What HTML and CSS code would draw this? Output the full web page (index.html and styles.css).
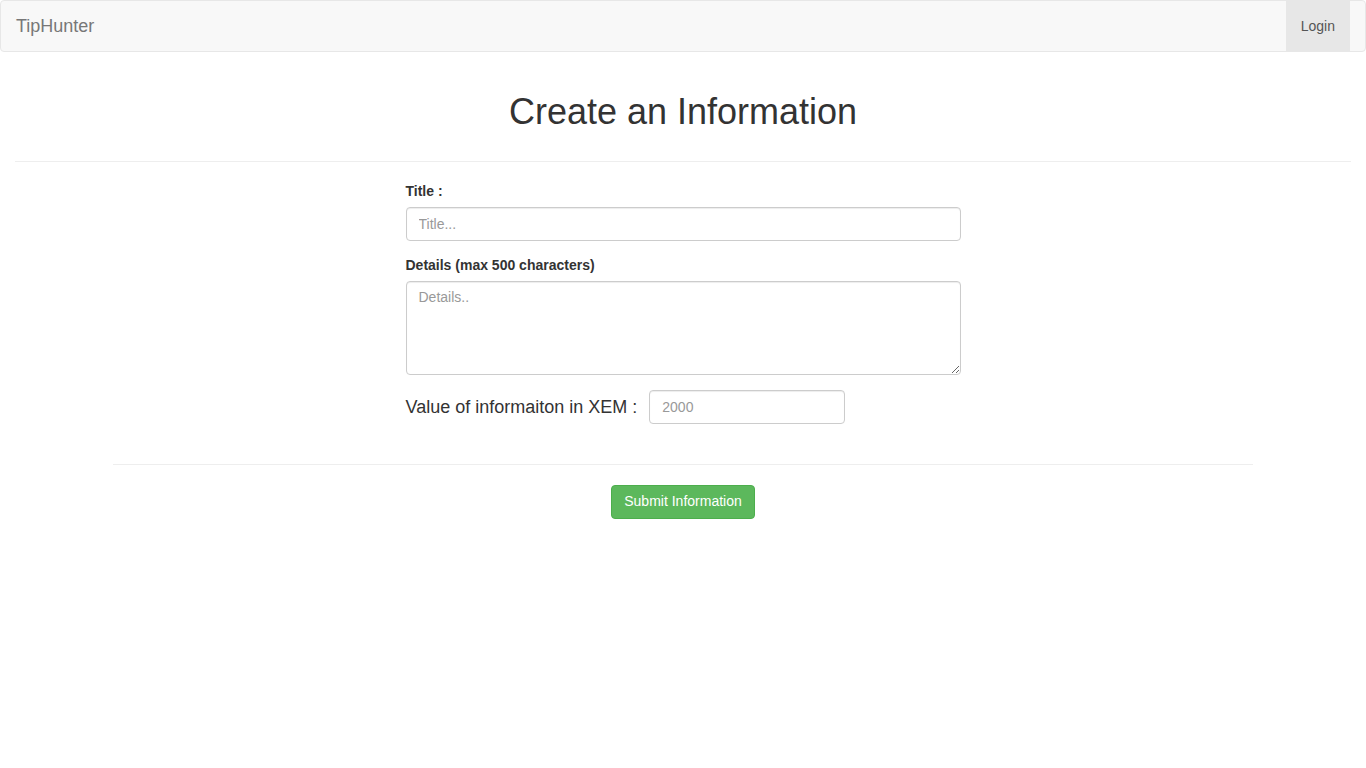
FILE: index.html
```html
<!DOCTYPE html>
<html lang="en">
<head>
<meta charset="utf-8">
<title>TipHunter</title>
<link rel="stylesheet" href="styles.css">
</head>
<body>
<nav class="navbar">
  <a class="brand" href="#">TipHunter</a>
  <a class="nav-login" href="#">Login</a>
</nav>
<div class="page">
  <h1 class="title">Create an Information</h1>
  <hr class="rule">
</div>
<div class="container">
  <form class="form">
    <div class="form-group">
      <label class="label" for="title">Title :</label>
      <input class="control" id="title" type="text" placeholder="Title...">
    </div>
    <div class="form-group">
      <label class="label" for="details">Details (max 500 characters)</label>
      <textarea class="control area" id="details" rows="4" placeholder="Details.."></textarea>
    </div>
    <div class="value-row">
      <span class="value-label">Value of informaiton in XEM :</span>
      <input class="control value-input" type="text" placeholder="2000">
    </div>
  </form>
  <hr class="rule wide">
  <div class="actions">
    <button class="btn-success" type="button">Submit Information</button>
  </div>
</div>
</body>
</html>
```
FILE: styles.css
```css
* { box-sizing: border-box; }
html, body { margin: 0; padding: 0; }
body {
  font-family: "Liberation Sans", Arial, Helvetica, sans-serif;
  font-size: 14px;
  line-height: 1.42857;
  color: #333;
  background: #fff;
}
.navbar {
  display: flex;
  justify-content: space-between;
  align-items: stretch;
  height: 52px;
  background: #f8f8f8;
  border: 1px solid #e7e7e7;
  border-radius: 4px;
  padding: 0 15px;
  margin-bottom: 20px;
}
.brand {
  font-size: 18px;
  line-height: 20px;
  padding: 15px 0;
  color: #777;
  text-decoration: none;
}
.nav-login {
  background: #e7e7e7;
  color: #555;
  text-decoration: none;
  line-height: 20px;
  padding: 15px 15px;
}
.page { padding: 20px 15px 0; }
.title {
  font-size: 36px;
  font-weight: 500;
  line-height: 1.1;
  margin: 0 0 29px;
  text-align: center;
  color: #333;
}
.rule {
  margin: 20px 0;
  border: 0;
  border-top: 1px solid #eee;
  height: 0;
}
.page .rule { margin-top: 0; }
.container {
  width: 1170px;
  margin: 0 auto;
  padding: 0 15px;
}
.form {
  width: 555px;
  margin: 0 auto;
}
.form-group { margin-bottom: 15px; }
.label {
  display: block;
  font-weight: 700;
  margin-bottom: 5px;
}
.control {
  display: block;
  width: 100%;
  height: 34px;
  padding: 6px 12px;
  font-family: inherit;
  font-size: 14px;
  line-height: 1.42857;
  color: #555;
  background: #fff;
  border: 1px solid #ccc;
  border-radius: 4px;
  box-shadow: inset 0 1px 1px rgba(0,0,0,.075);
}
.control::placeholder { color: #999; }
.area { height: 94px; resize: vertical; }
.value-row {
  display: flex;
  align-items: center;
  gap: 12px;
  margin-bottom: 40px;
}
.value-label {
  font-size: 18px;
  line-height: 20px;
}
.value-input { width: 196px; }
.wide { margin-top: 0; }
.actions { text-align: center; }
.btn-success {
  display: inline-block;
  height: 34px;
  padding: 6px 12px;
  font-family: inherit;
  font-size: 14px;
  line-height: 1.42857;
  color: #fff;
  background: #5cb85c;
  border: 1px solid #4cae4c;
  border-radius: 4px;
  cursor: pointer;
}
```
